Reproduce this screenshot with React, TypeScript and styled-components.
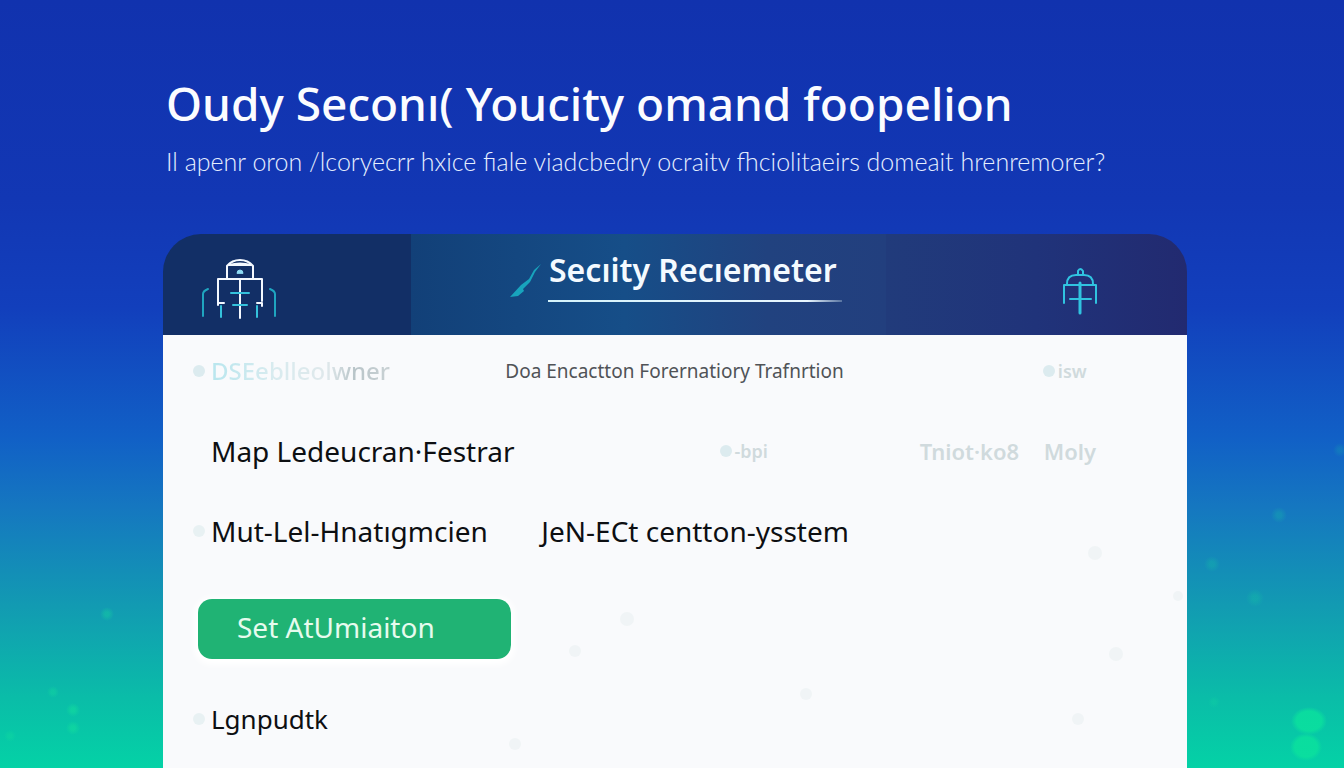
import React from "react";
import styled, { createGlobalStyle } from "styled-components";

const GlobalStyle = createGlobalStyle`
  * { box-sizing: border-box; }
  body {
    margin: 0;
    font-family: "Noto Sans", "Open Sans", sans-serif;
    color: #0d0f12;
  }
`;

const Page = styled.div`
  position: relative;
  min-height: 100vh;
  display: flex;
  flex-direction: column;
  padding: 75px 157px 0 163px;
  overflow: hidden;
  background: linear-gradient(
    180deg,
    #1132ae 0%,
    #1237b4 26%,
    #123fbc 40%,
    #1160c6 57%,
    #1577c0 66%,
    #129bb2 79%,
    #0abda8 91%,
    #04d2a6 100%
  );
`;

const Sparkles = styled.svg`
  position: absolute;
  inset: 0;
  width: 100%;
  height: 100%;
  pointer-events: none;
`;

const Intro = styled.header`
  padding-left: 3px;
  height: 159px;
  white-space: nowrap;
`;

const Heading = styled.h1`
  margin: 0;
  font-size: 46px;
  line-height: 56px;
  font-weight: 500;
  color: #fbfcff;
`;

const Subheading = styled.p`
  margin: 12px 0 0;
  font-family: Lato, "Noto Sans", sans-serif;
  font-size: 25px;
  line-height: 36px;
  font-weight: 300;
  color: #e6efff;
`;

const Card = styled.main`
  flex: 1;
  display: flex;
  flex-direction: column;
`;

const CardHeader = styled.div`
  display: grid;
  grid-template-columns: 248fr 475fr 301fr;
  height: 101px;
  border-radius: 38px 38px 0 0;
  overflow: hidden;
`;

const BrandPanel = styled.div`
  padding: 24px 0 0 36px;
  background: #122f66;
`;

const TitlePanel = styled.div`
  display: flex;
  align-items: flex-start;
  gap: 6px;
  padding: 16px 0 0 97px;
  background: linear-gradient(90deg, #124078 0%, #164e88 45%, #21427f 75%, #223f7e 100%);
`;

const Title = styled.h2`
  margin: 0;
  padding: 0 5px 10px 1px;
  font-size: 32px;
  line-height: 40px;
  font-weight: 600;
  white-space: nowrap;
  color: #f4faff;
  border-bottom: 2px solid;
  border-image: linear-gradient(90deg, #d5f3fb 0%, #e8f6ff 88%, #54709f 100%) 1;
`;

const StatusPanel = styled.div`
  padding: 32px 0 0 175px;
  background: linear-gradient(90deg, #213b7b 0%, #20337a 50%, #222a70 100%);
`;

const CardBody = styled.div`
  position: relative;
  flex: 1;
  padding: 16px 0 28px 32px;
  background: #f9fafc;
`;

const Row = styled.div<{ $columns: string }>`
  display: grid;
  grid-template-columns: 16px ${(p) => p.$columns};
  align-items: center;
  height: 40px;
  white-space: nowrap;
  & + & { margin-top: 40px; }
`;

const Bullet = styled.span<{ $hidden?: boolean; $tint?: boolean }>`
  width: 12px;
  height: 12px;
  margin-left: -2px;
  border-radius: 6px;
  background: ${(p) => (p.$tint ? "#dcebef" : "#e8f1f3")};
  visibility: ${(p) => (p.$hidden ? "hidden" : "visible")};
`;

const Label = styled.span<{ $small?: boolean }>`
  font-size: ${(p) => (p.$small ? 26 : 28)}px;
  line-height: 36px;
`;

const Caption = styled.span`
  font-size: 19px;
  line-height: 28px;
  color: #505357;
`;

const Faint = styled.span<{ $size: number }>`
  display: flex;
  align-items: center;
  gap: 3px;
  font-size: ${(p) => p.$size}px;
  line-height: 28px;
  font-weight: 600;
  color: #d0dadd;
`;

const Fade = styled.span`
  font-weight: 500;
  color: transparent;
  background: linear-gradient(90deg, #b8e6ee 0%, #d8ebef 35%, #dfe8eb 65%, #b9c5c9 80%, #c9d1d4 100%);
  background-clip: text;
`;

const Action = styled.button`
  display: block;
  width: 313px;
  height: 60px;
  margin: 48px 0 40px 3px;
  padding: 0 0 4px 39px;
  border: 0;
  border-radius: 14px;
  background: #20b374;
  box-shadow: 0 2px 6px 4px #ffffff;
  font: 400 28px/36px "Noto Sans", sans-serif;
  text-align: left;
  color: #e6fbee;
  cursor: pointer;
`;

const sparkles = [
  [107, 614, 7, 0.35], [53, 692, 6, 0.35], [73, 710, 7, 0.5], [73, 728, 7, 0.5],
  [10, 736, 6, 0.3], [1279, 515, 8, 0.2], [1212, 564, 8, 0.2], [1255, 598, 9, 0.2],
  [1340, 450, 7, 0.15], [1214, 702, 6, 0.2],
];

const specks = [
  [464, 284, 7], [412, 316, 6], [932, 218, 7], [953, 319, 7], [643, 359, 6],
  [352, 409, 6], [915, 384, 6], [1015, 261, 5],
];

const VaultLogo = () => (
  <svg width="78" height="64" viewBox="0 0 78 64" fill="none" strokeLinecap="round" strokeLinejoin="round" aria-hidden="true">
    <g stroke="#f3f8ff" strokeWidth="2">
      <path d="M28 21V8q5-6 13-6t13 6v13" />
      <path d="M19 47V21H63V43" />
      <path d="M19 45h6M58 45h5v3" />
      <path d="M41 22V60" />
      <path d="M30 7q11-3 22 0z" />
    </g>
    <path d="M38 15a3 3 0 0 1 6 0z" fill="#8fdcf5" stroke="#8fdcf5" strokeWidth="1" />
    <g stroke="#35c2dc" strokeWidth="2">
      <path d="M32 35h18M34 47h14M22 48v11M58 48v11" />
      <path d="M4 58V36q0-3 5-5M76 58V36q0-3-5-5" stroke="#1fa5bf" />
    </g>
  </svg>
);

const PenStroke = () => (
  <svg width="34" height="50" viewBox="0 0 34 50" aria-hidden="true">
    <path d="M33 14 26 20 21 29 13 35 2 47 10 46 16 41 15 39 22 32 27 22z" fill="#18a4bd" />
  </svg>
);

const GateIcon = () => (
  <svg width="38" height="50" viewBox="0 0 38 50" fill="none" stroke="#30c3e0" strokeWidth="2" strokeLinecap="round" strokeLinejoin="round" aria-hidden="true">
    <path d="M17 8V5q2-4 5 0v3" />
    <path d="M6 18q0-9 9-9h8q9 0 9 9" />
    <path d="M3 37V19H35V37" />
    <path d="M9 33H30" />
    <path d="M19 17V47" strokeWidth="3" />
  </svg>
);

export default function App() {
  return (
    <>
      <GlobalStyle />
      <Page>
        <Sparkles viewBox="0 0 1344 768" preserveAspectRatio="none" aria-hidden="true">
          <defs>
            <radialGradient id="glow">
              <stop offset="0.3" stopColor="#14e09c" />
              <stop offset="1" stopColor="#14e09c" stopOpacity="0" />
            </radialGradient>
            <radialGradient id="orb">
              <stop offset="0.7" stopColor="#0be29d" />
              <stop offset="1" stopColor="#0be29d" stopOpacity="0" />
            </radialGradient>
          </defs>
          {sparkles.map(([x, y, r, o]) => (
            <circle key={`${x}-${y}`} cx={x} cy={y} r={r} fill="url(#glow)" opacity={o} />
          ))}
          <ellipse cx="1309" cy="721" rx="18" ry="14" fill="url(#orb)" opacity="0.8" />
          <ellipse cx="1306" cy="747" rx="16" ry="14" fill="url(#orb)" opacity="0.8" />
        </Sparkles>
        <Intro>
          <Heading>Oudy Seconı( Youcity omand foopelion</Heading>
          <Subheading>
            Il apenr oron /lcoryecrr hxice fiale viadcbedry ocraitv fhciolitaeirs domeait hrenremorer?
          </Subheading>
        </Intro>
        <Card>
          <CardHeader>
            <BrandPanel><VaultLogo /></BrandPanel>
            <TitlePanel>
              <PenStroke />
              <Title>Secıity Recıemeter</Title>
            </TitlePanel>
            <StatusPanel><GateIcon /></StatusPanel>
          </CardHeader>
          <CardBody>
            <Sparkles viewBox="0 0 1024 433" preserveAspectRatio="none" aria-hidden="true">
              {specks.map(([x, y, r]) => (
                <circle key={`${x}-${y}`} cx={x} cy={y} r={r} fill="#f0f4f6" />
              ))}
            </Sparkles>
            <Row $columns="294fr 539fr 142fr">
              <Bullet $tint />
              <Faint $size={24}><Fade>DSEeblleolwner</Fade></Faint>
              <Caption>Doa Encactton Forernatiory Trafnrtion</Caption>
              <Faint $size={18}><Bullet $tint />isw</Faint>
            </Row>
            <Row $columns="510fr 198fr 124fr 143fr">
              <Bullet $hidden />
              <Label>Map Ledeucran·Festrar</Label>
              <Faint $size={18}><Bullet $tint />-bpi</Faint>
              <Faint $size={22}>Tniot·ko8</Faint>
              <Faint $size={22}>Moly</Faint>
            </Row>
            <Row $columns="330fr 645fr">
              <Bullet />
              <Label>Mut-Lel-Hnatıgmcien</Label>
              <Label>JeN-ECt centton-ysstem</Label>
            </Row>
            <Action type="button">Set AtUmiaiton</Action>
            <Row $columns="1fr">
              <Bullet />
              <Label $small>Lgnpudtk</Label>
            </Row>
          </CardBody>
        </Card>
      </Page>
    </>
  );
}
